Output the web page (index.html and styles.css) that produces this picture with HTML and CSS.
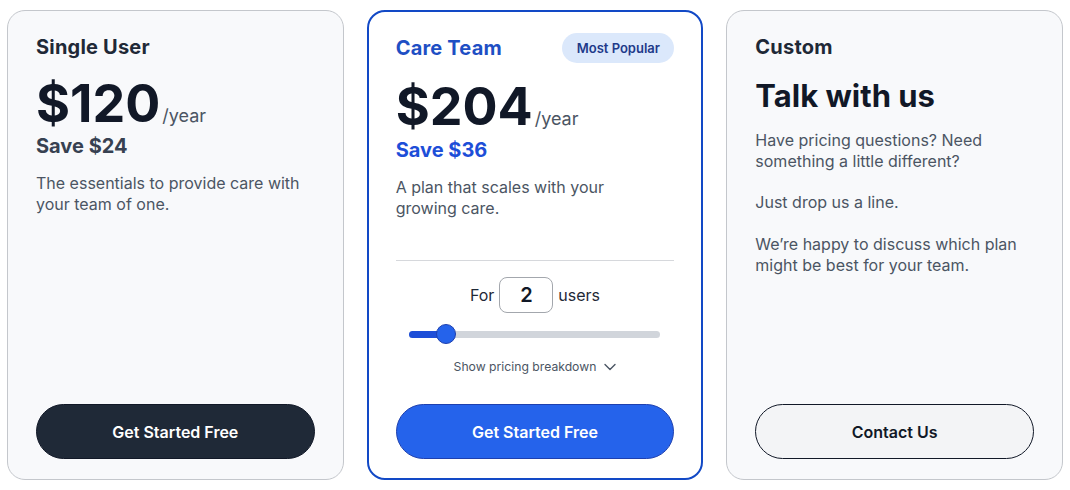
FILE: index.html
```html
<!DOCTYPE html>
<html lang="en">
<head>
<meta charset="utf-8">
<title>Pricing</title>
<link rel="stylesheet" href="styles.css">
</head>
<body>
<div class="plans">
  <section class="card">
    <div class="head"><h2 class="title">Single User</h2></div>
    <div class="price-row"><span class="price">$120</span><span class="per">/year</span></div>
    <div class="save">Save $24</div>
    <p class="desc">The essentials to provide care with your team of one.</p>
    <button class="btn btn-dark">Get Started Free</button>
  </section>

  <section class="card card-featured">
    <div class="head"><h2 class="title title-blue">Care Team</h2><span class="badge">Most Popular</span></div>
    <div class="price-row"><span class="price price-lg">$204</span><span class="per">/year</span></div>
    <div class="save save-blue">Save $36</div>
    <p class="desc">A plan that scales with your growing care.</p>
    <hr class="divider">
    <div class="users">
      <span>For</span>
      <span class="count">2</span>
      <span>users</span>
    </div>
    <div class="slider">
      <div class="track"><div class="fill"></div></div>
      <div class="thumb"></div>
    </div>
    <div class="breakdown">
      <span>Show pricing breakdown</span>
      <svg width="12" height="8" viewBox="0 0 12 8" fill="none" stroke="#4b5563" stroke-width="1.4" stroke-linecap="round" stroke-linejoin="round"><path d="M1 1.5l5 5 5-5"/></svg>
    </div>
    <button class="btn btn-blue">Get Started Free</button>
  </section>

  <section class="card">
    <div class="head"><h2 class="title">Custom</h2></div>
    <div class="talk">Talk with us</div>
    <p class="desc">Have pricing questions? Need something a little different?</p>
    <p class="desc desc-gap">Just drop us a line.</p>
    <p class="desc desc-gap desc-last">We’re happy to discuss which plan might be best for your team.</p>
    <button class="btn btn-outline">Contact Us</button>
  </section>
</div>
</body>
</html>
```

FILE: styles.css
```css
* { box-sizing: border-box; }
html, body { margin: 0; padding: 0; background: #ffffff; }
body {
  font-family: Inter, "Noto Sans", "Liberation Sans", sans-serif;
  color: #111827;
  width: 1070px;
  height: 490px;
  overflow: hidden;
}
.plans {
  display: grid;
  grid-template-columns: repeat(3, 1fr);
  gap: 23px;
  padding: 10px 7px;
  height: 490px;
}
.card {
  display: flex;
  flex-direction: column;
  background: #f8f9fb;
  border: 1px solid #c4c7cc;
  border-radius: 18px;
  padding: 22px 28px 20px;
  height: 470px;
}
.card-featured {
  background: #ffffff;
  border: 2px solid #1249c6;
  padding: 21px 27px 19px;
}
.head {
  display: flex;
  align-items: center;
  justify-content: space-between;
  min-height: 28px;
}
.title {
  margin: 0;
  font-size: 20px;
  line-height: 28px;
  font-weight: 700;
  color: #1f2937;
  letter-spacing: 0.2px;
}
.title-blue { color: #1e4fc4; }
.badge {
  display: inline-flex;
  align-items: center;
  justify-content: center;
  height: 30px;
  width: 112px;
  border-radius: 15px;
  background: #dbe8fb;
  color: #1e3a8a;
  font-size: 13px;
  font-weight: 600;
}
.price-row {
  display: flex;
  align-items: baseline;
  margin-top: 15px;
}
.price {
  font-size: 52px;
  line-height: 56px;
  font-weight: 700;
  color: #111827;
}
.price-lg { line-height: 58px; }
.per {
  font-size: 18px;
  color: #4b5563;
  margin-left: 2px;
}
.save {
  font-size: 20px;
  line-height: 28px;
  font-weight: 700;
  color: #374151;
}
.save-blue { color: #1d4ed8; }
.desc {
  margin: 13px 0 0;
  max-width: 265px;
  font-size: 16px;
  line-height: 21px;
  color: #4b5563;
}
.desc-gap { margin-top: 20px; }
.desc-last { margin-top: 21px; }
.talk {
  margin-top: 15px;
  font-size: 31px;
  line-height: 40px;
  font-weight: 700;
  color: #111827;
}
.card .talk + .desc { margin-top: 14px; }
.divider {
  border: 0;
  border-top: 1px solid #d6d8dc;
  margin: 41px 0 0;
  width: 100%;
}
.users {
  display: flex;
  align-items: center;
  justify-content: center;
  gap: 5px;
  margin-top: 16px;
  font-size: 16px;
  color: #1f2937;
}
.count {
  display: inline-flex;
  align-items: center;
  justify-content: center;
  width: 54px;
  height: 36px;
  border: 1px solid #a3a7ad;
  border-radius: 8px;
  font-size: 20px;
  font-weight: 600;
  color: #111827;
}
.slider {
  position: relative;
  height: 22px;
  margin: 10px 14px 0 13px;
  display: flex;
  align-items: center;
}
.track {
  width: 100%;
  height: 7px;
  border-radius: 4px;
  background: #d1d5db;
  overflow: hidden;
}
.fill {
  width: 37px;
  height: 100%;
  background: #1d4ed8;
}
.thumb {
  position: absolute;
  left: 27px;
  top: 1px;
  width: 20px;
  height: 20px;
  border-radius: 50%;
  background: #2563eb;
  border: 1px solid #1e40af;
}
.breakdown {
  display: flex;
  align-items: center;
  justify-content: center;
  gap: 8px;
  margin-top: 14px;
  font-size: 12.2px;
  color: #4b5563;
}
.btn {
  margin-top: auto;
  height: 55px;
  width: 100%;
  border-radius: 28px;
  font-family: inherit;
  font-size: 16px;
  font-weight: 600;
  cursor: pointer;
}
.btn-dark {
  background: #1f2937;
  border: 1px solid #111827;
  color: #ffffff;
}
.btn-blue {
  background: #2563eb;
  border: 1px solid #1e40af;
  color: #ffffff;
}
.btn-outline {
  background: #f3f4f6;
  border: 1px solid #111827;
  color: #111827;
}
```
